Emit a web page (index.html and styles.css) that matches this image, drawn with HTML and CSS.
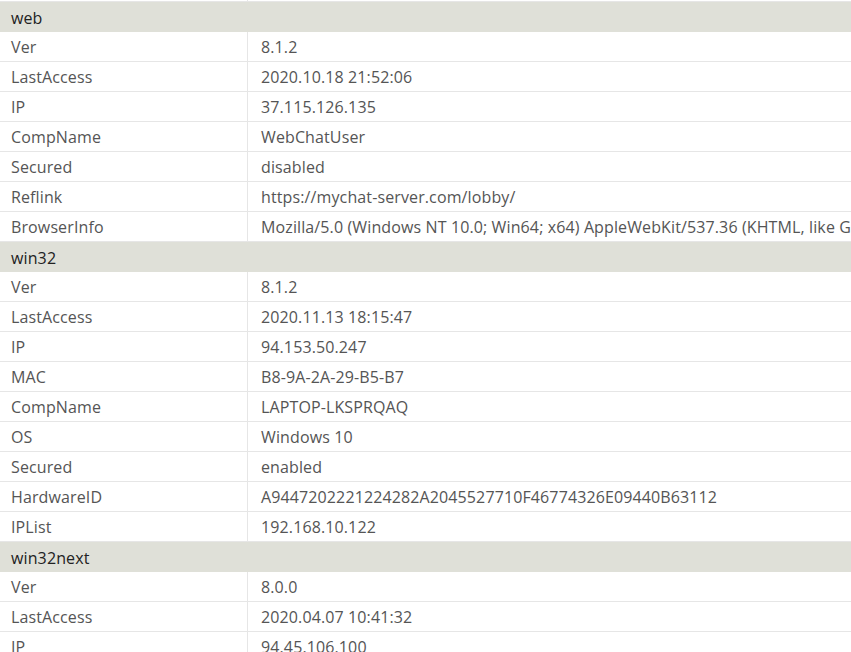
FILE: index.html
```html
<!DOCTYPE html>
<html>
<head>
<meta charset="utf-8">
<link rel="stylesheet" href="styles.css">
</head>
<body>
<table class="info">
  <tr class="stub"><td class="key"></td><td class="val"></td></tr>
  <tr class="group"><td colspan="2">web</td></tr>
  <tr><td class="key">Ver</td><td class="val">8.1.2</td></tr>
  <tr><td class="key">LastAccess</td><td class="val">2020.10.18 21:52:06</td></tr>
  <tr><td class="key">IP</td><td class="val">37.115.126.135</td></tr>
  <tr><td class="key">CompName</td><td class="val">WebChatUser</td></tr>
  <tr><td class="key">Secured</td><td class="val">disabled</td></tr>
  <tr><td class="key">Reflink</td><td class="val">https://mychat-server.com/lobby/</td></tr>
  <tr><td class="key">BrowserInfo</td><td class="val">Mozilla/5.0 (Windows NT 10.0; Win64; x64) AppleWebKit/537.36 (KHTML, like Gecko) Chrome/86.0.4240.75 Safari/537.36</td></tr>
  <tr class="group"><td colspan="2">win32</td></tr>
  <tr><td class="key">Ver</td><td class="val">8.1.2</td></tr>
  <tr><td class="key">LastAccess</td><td class="val">2020.11.13 18:15:47</td></tr>
  <tr><td class="key">IP</td><td class="val">94.153.50.247</td></tr>
  <tr><td class="key">MAC</td><td class="val">B8-9A-2A-29-B5-B7</td></tr>
  <tr><td class="key">CompName</td><td class="val">LAPTOP-LKSPRQAQ</td></tr>
  <tr><td class="key">OS</td><td class="val">Windows 10</td></tr>
  <tr><td class="key">Secured</td><td class="val">enabled</td></tr>
  <tr><td class="key">HardwareID</td><td class="val">A9447202221224282A2045527710F46774326E09440B63112</td></tr>
  <tr><td class="key">IPList</td><td class="val">192.168.10.122</td></tr>
  <tr class="group"><td colspan="2">win32next</td></tr>
  <tr><td class="key">Ver</td><td class="val">8.0.0</td></tr>
  <tr><td class="key">LastAccess</td><td class="val">2020.04.07 10:41:32</td></tr>
  <tr><td class="key">IP</td><td class="val">94.45.106.100</td></tr>
</table>
</body>
</html>
```
FILE: styles.css
```css
html, body {
  margin: 0;
  padding: 0;
  background: #ffffff;
  overflow: hidden;
}
.info {
  border-collapse: collapse;
  table-layout: fixed;
  width: 1200px;
  font-family: "Open Sans", "Noto Sans", sans-serif;
  font-size: 16px;
  letter-spacing: 0.12px;
  color: #555555;
}
.info td {
  height: 28px;
  padding: 1px 10px 0 11px;
  border-bottom: 1px solid #e6e6e6;
  white-space: nowrap;
  overflow: hidden;
  line-height: 20px;
}
.info td.key {
  width: 247px;
  border-right: 1px solid #e6e6e6;
}
.info td.val {
  padding-left: 13px;
}
.info tr.stub td {
  height: 1px;
  padding: 0;
}
.info tr.group td {
  background: #dfe0d8;
  color: #222222;
  height: 29px;
  border-bottom: 0;
}
```
